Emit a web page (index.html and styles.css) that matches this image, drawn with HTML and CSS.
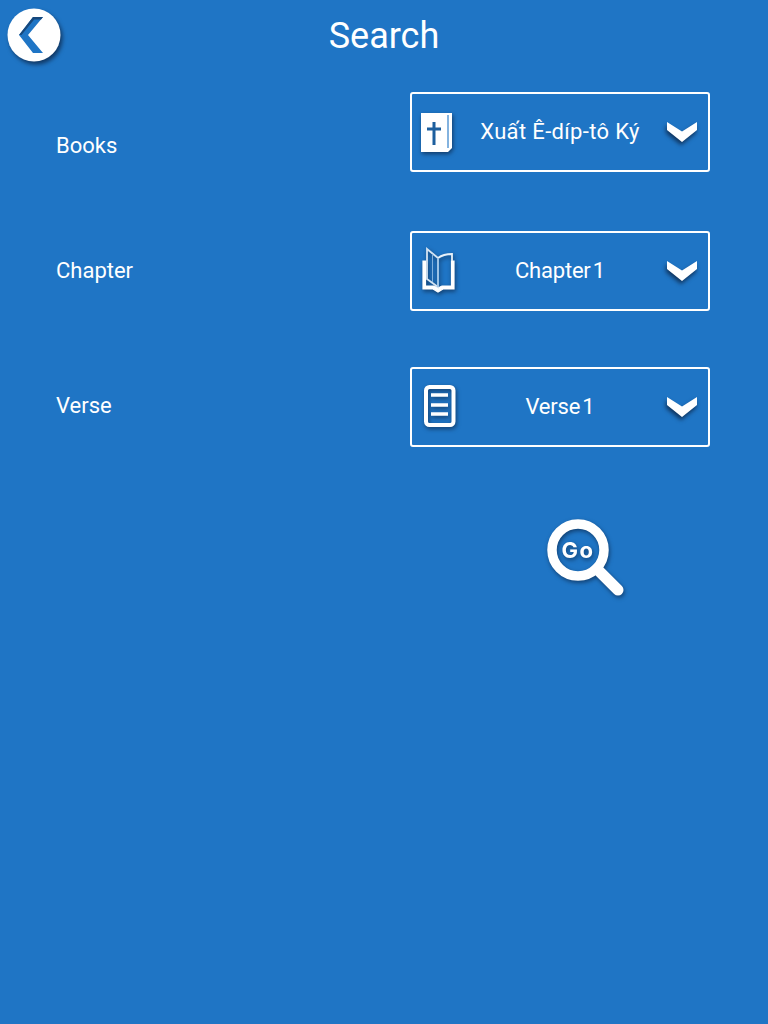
FILE: index.html
```html
<!DOCTYPE html>
<html lang="vi">
<head>
<meta charset="utf-8">
<title>Search</title>
<link rel="stylesheet" href="styles.css">
</head>
<body>
<div class="page">
  <header class="header">
    <button class="back" aria-label="Back">
      <svg class="back-icon" viewBox="0 0 54 54" width="54" height="54">
        <circle cx="27" cy="27" r="26.5" fill="#fff"/>
        <path d="M26 9 H36 L21 27 L36 45 H26 L12 27 Z" fill="#1f75c5"/>
        <path d="M26 9 H36 L34 11.4 H27.2 L14.5 27 L12 27 Z" fill="#17487c"/>
      </svg>
    </button>
    <h1 class="title">Search</h1>
  </header>

  <div class="form">
    <div class="row row-books">
      <span class="label label-books">Books</span>
      <div class="select">
        <svg class="icon icon-books" viewBox="0 0 40 50" width="40" height="50">
          <path d="M3 7 H34 V42 L30 46 H3 Z" fill="#fff"/>
          <path d="M30 9 V42" stroke="#1f75c5" stroke-width="1.1" fill="none"/>
          <path d="M16 16 V39 M9 23 H23" stroke="#1d5f9e" stroke-width="3" fill="none"/>
        </svg>
        <span class="value value-books">Xuất Ê-díp-tô Ký</span>
        <svg class="chev" viewBox="0 0 32 24" width="32" height="24">
          <path d="M1 2 L16 11.5 L31 2 V10 L16 22 L1 10 Z" fill="#fff"/>
        </svg>
      </div>
    </div>

    <div class="row row-chapter">
      <span class="label">Chapter</span>
      <div class="select">
        <svg class="icon" viewBox="0 0 40 50" width="40" height="50">
          <path d="M5 15 V43 H15 L20 46 L25 43 H36 V15 H33.5 V40 H24 L20 42 L16 40 H7.5 V15 Z" fill="#fff" stroke="#fff" stroke-width="1.2"/>
          <path d="M9 3 L20 12 V41 L9 33 Z" fill="none" stroke="#d5e4f2" stroke-width="1.8"/>
          <path d="M20 12 C24 9 28 8 34 8 V15" fill="none" stroke="#e8f1f9" stroke-width="1.8"/>
          <path d="M14.5 8 V36" stroke="#7fb0dd" stroke-width="1" fill="none"/>
          <path d="M20 12 V41" stroke="#8fbce4" stroke-width="1.5" fill="none"/>
        </svg>
        <span class="value value-tight">Chapter 1</span>
        <svg class="chev" viewBox="0 0 32 24" width="32" height="24">
          <path d="M1 2 L16 11.5 L31 2 V10 L16 22 L1 10 Z" fill="#fff"/>
        </svg>
      </div>
    </div>

    <div class="row row-verse">
      <span class="label">Verse</span>
      <div class="select">
        <svg class="icon" viewBox="0 0 40 50" width="40" height="50">
          <rect x="8" y="5" width="27.5" height="38" rx="3.5" fill="none" stroke="#fff" stroke-width="4"/>
          <path d="M13 13 H30 M13 23 H30 M13 32 H30" stroke="#fff" stroke-width="3.4" fill="none"/>
        </svg>
        <span class="value value-tight">Verse 1</span>
        <svg class="chev" viewBox="0 0 32 24" width="32" height="24">
          <path d="M1 2 L16 11.5 L31 2 V10 L16 22 L1 10 Z" fill="#fff"/>
        </svg>
      </div>
    </div>
  </div>

  <div class="go-wrap">
    <button class="go" aria-label="Go">
      <svg class="go-icon" viewBox="0 0 84 84" width="84" height="84">
        <circle cx="32" cy="32" r="26" fill="none" stroke="#fff" stroke-width="9.5"/>
        <path d="M51 51 L72 72" stroke="#fff" stroke-width="11" stroke-linecap="round"/>
        <text x="32" y="39.5" class="go-text" text-anchor="middle">Go</text>
      </svg>
    </button>
  </div>
</div>
</body>
</html>
```
FILE: styles.css
```css
* { box-sizing: border-box; }
html, body { margin: 0; height: 100%; }
body {
  background: #1f75c5;
  color: #fff;
  font-family: "Roboto", "Liberation Sans", sans-serif;
}
.page {
  height: 1024px;
  overflow: hidden;
  display: flex;
  flex-direction: column;
}
.header {
  display: grid;
  grid-template-columns: 1fr auto 1fr;
  align-items: start;
  height: 92px;
  padding: 8px 0 0 7px;
}
.back {
  grid-column: 1;
  justify-self: start;
  width: 54px;
  height: 54px;
  padding: 0;
  border: 0;
  background: none;
  display: block;
}
.back-icon {
  display: block;
  filter: drop-shadow(2px 3px 2px rgba(12, 40, 75, 0.8));
}
.title {
  grid-column: 2;
  margin: 6px 7px 0 0;
  font-size: 36px;
  line-height: 44px;
  font-weight: 400;
}
.form {
  display: flex;
  flex-direction: column;
  padding: 0 58px 0 56px;
}
.row {
  display: flex;
  justify-content: space-between;
  align-items: center;
}
.row-chapter { margin-top: 59px; }
.row-verse { margin-top: 56px; }
.label {
  font-size: 22px;
  line-height: 28px;
}
.label-books { margin-top: 28px; }
.row-verse .label { margin-bottom: 3px; }
.select {
  width: 300px;
  height: 80px;
  border: 2px solid #fff;
  border-radius: 3px;
  display: flex;
  align-items: center;
  padding: 0 10px 0 6px;
}
.icon {
  flex: none;
  display: block;
  filter: drop-shadow(1px 2px 2px rgba(12, 40, 75, 0.75));
}
.icon-books { margin-top: -2px; }
.value {
  flex: 1;
  text-align: center;
  font-size: 22px;
  line-height: 28px;
  padding-right: 4px;
}
.value-books {
  margin-top: -1px;
  letter-spacing: 0.35px;
}
.value-tight {
  word-spacing: -3px;
  letter-spacing: -0.2px;
}
.chev {
  flex: none;
  display: block;
  filter: drop-shadow(-1px 3px 2px rgba(12, 40, 75, 0.85));
}
.go-wrap {
  display: flex;
  padding: 71px 0 0 546px;
}
.go {
  width: 84px;
  height: 84px;
  padding: 0;
  border: 0;
  background: none;
}
.go-icon {
  display: block;
  filter: drop-shadow(1px 2px 2px rgba(12, 40, 75, 0.7));
}
.go-text {
  font-family: "Inter", "Liberation Sans", sans-serif;
  font-size: 22px;
  font-weight: 700;
  letter-spacing: 1.4px;
  fill: #fff;
}
```
